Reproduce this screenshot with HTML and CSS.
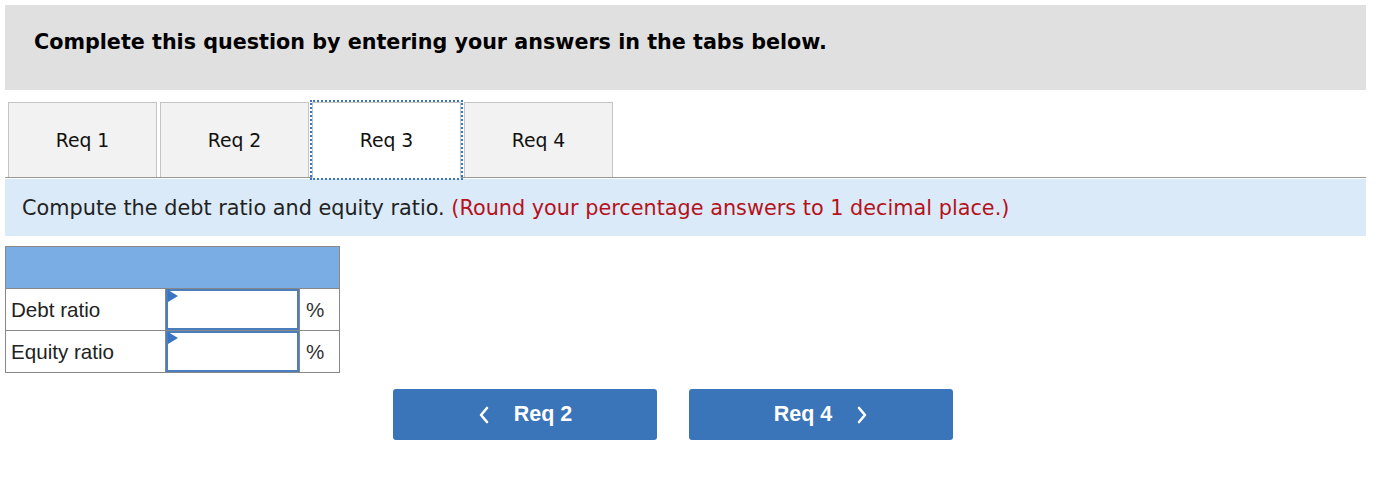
FILE: index.html
```html
<!DOCTYPE html>
<html>
<head>
<meta charset="utf-8">
<link rel="stylesheet" href="styles.css">
</head>
<body>
<div class="page">
  <div class="banner">Complete this question by entering your answers in the tabs below.</div>
  <div class="tabs">
    <div class="tab">Req 1</div>
    <div class="tab">Req 2</div>
    <div class="tab active">Req 3</div>
    <div class="tab">Req 4</div>
    <div class="tab-fill"></div>
  </div>
  <div class="instructions">Compute the debt ratio and equity ratio. <span class="red">(Round your percentage answers to 1 decimal place.)</span></div>
  <table class="grid">
    <tr class="head"><td colspan="3"></td></tr>
    <tr>
      <td class="label">Debt ratio</td>
      <td class="inp"><div class="box"><span class="flag"></span></div></td>
      <td class="pct">%</td>
    </tr>
    <tr>
      <td class="label">Equity ratio</td>
      <td class="inp"><div class="box"><span class="flag"></span></div></td>
      <td class="pct">%</td>
    </tr>
  </table>
  <div class="nav">
    <button class="btn"><svg class="chev" width="12" height="18" viewBox="0 0 12 18"><path d="M9 2 L3 9 L9 16" fill="none" stroke="#fff" stroke-width="2.6" stroke-linecap="round" stroke-linejoin="round"/></svg><span>Req 2</span></button>
    <button class="btn"><span>Req 4</span><svg class="chev" width="12" height="18" viewBox="0 0 12 18"><path d="M3 2 L9 9 L3 16" fill="none" stroke="#fff" stroke-width="2.6" stroke-linecap="round" stroke-linejoin="round"/></svg></button>
  </div>
</div>
</body>
</html>
```
FILE: styles.css
```css
html, body { margin: 0; padding: 0; background: #fff; }
.page { padding: 5px 20px 0 5px; font-family: "DejaVu Sans", Verdana, sans-serif; color: #111; }
.banner {
  background: #e0e0e0;
  height: 85px;
  box-sizing: border-box;
  padding: 25px 0 0 29px;
  font-weight: bold;
  font-size: 20.7px;
  color: #000;
}
.tabs { display: flex; margin-top: 12px; padding-left: 3px; gap: 3px; align-items: flex-end; border-bottom: 1px solid #999; height: 75px; }
.tab {
  width: 149px; height: 75px; box-sizing: border-box;
  background: #f2f2f2; border: 1px solid #c4c4c4; border-bottom: none;
  display: flex; align-items: center; justify-content: center;
  font-size: 18.8px; color: #111; padding-top: 1px;
}
.tab.active { background: #fff; outline: 2px dotted #3a75c4; outline-offset: 0px; height: 76px; margin-bottom: -1px; padding-top: 0; position: relative; }
.tab-fill { flex: 1; }
.instructions {
  background: #dbeaf8; height: 57px; box-sizing: border-box; margin-top: 1px;
  padding: 17px 0 0 17px; font-size: 20.8px; color: #222;
}
.red { color: #b5121b; }
.grid { border-collapse: collapse; margin-top: 10px; font-family: "Liberation Sans", Arial, sans-serif; font-size: 20.6px; }
.grid td { border: 1px solid #888; padding: 0; height: 41px; }
.grid tr.head td { background: #7aade3; height: 41px; }
.label { width: 154px; padding-left: 5px !important; color: #222; }
.inp { width: 133px; }
.box { height: 41px; box-sizing: border-box; border: 2px solid #4a7ebd; position: relative; background: #fff; }
.flag { position: absolute; left: 0; top: -1px; width: 0; height: 0; border-top: 6px solid transparent; border-bottom: 6px solid transparent; border-left: 10px solid #3a75c4; }
.pct { width: 40px; padding-left: 6px !important; box-sizing: border-box; color: #333; }
.nav { display: flex; gap: 32px; margin: 16px 0 0 388px; }
.btn {
  width: 264px; height: 51px; background: #3a75b9; border: none; border-radius: 3px;
  color: #fff; font-family: "Liberation Sans", Arial, sans-serif; font-weight: bold; font-size: 21.5px;
  display: flex; align-items: center; justify-content: center; gap: 24px; padding: 0;
}
```
